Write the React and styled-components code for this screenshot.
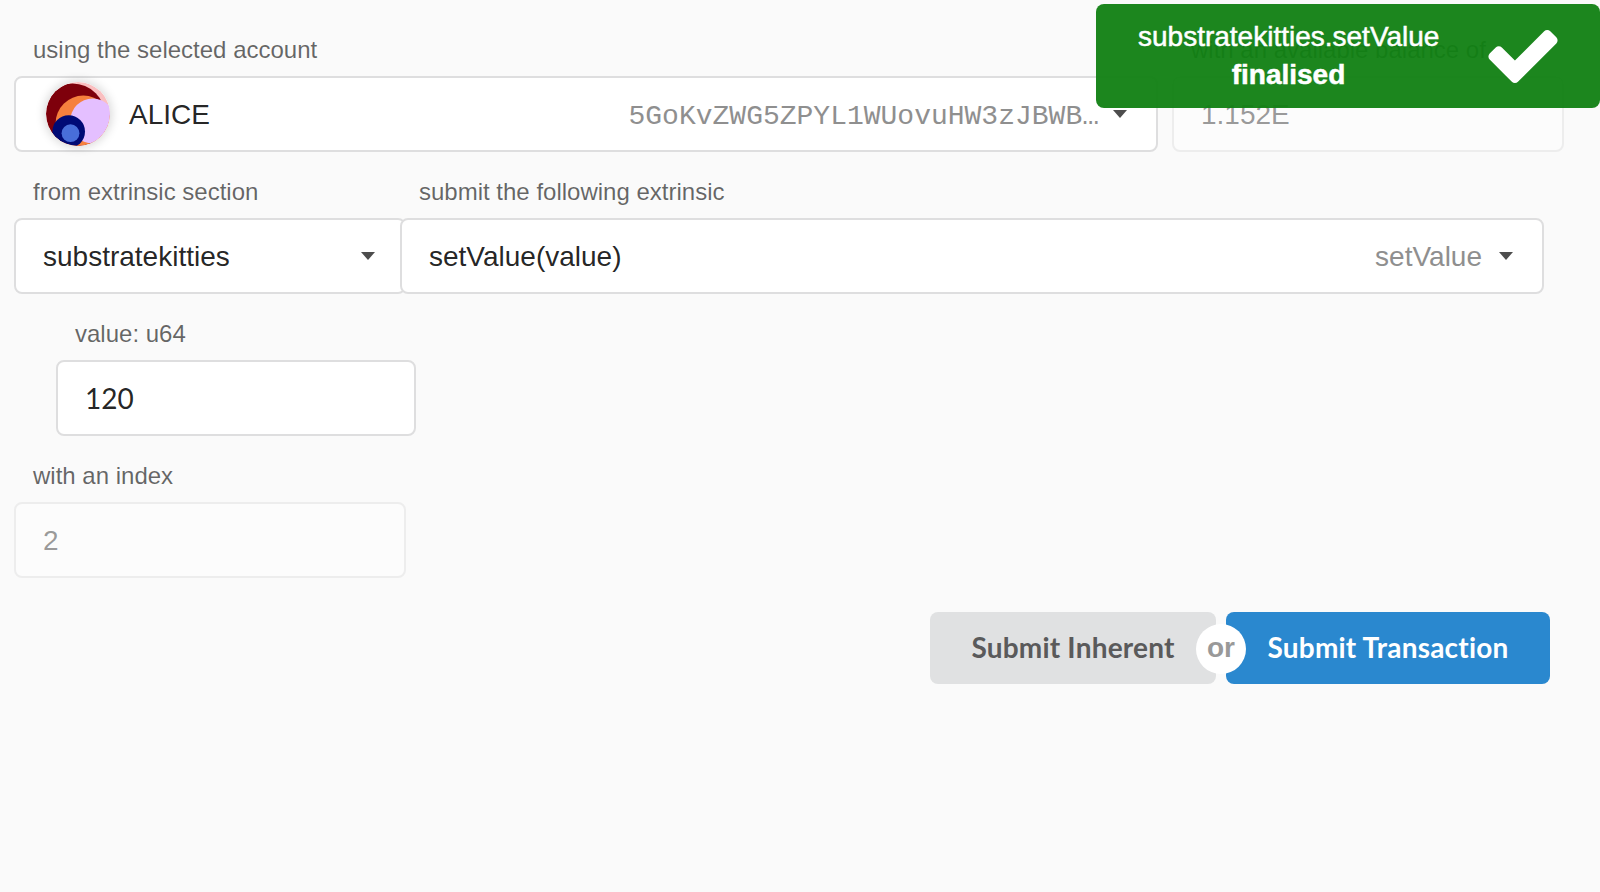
import React from 'react';
import styled, { createGlobalStyle } from 'styled-components';

const GlobalStyle = createGlobalStyle`
  *, *::before, *::after { box-sizing: border-box; }
  body {
    margin: 0;
    background: #fafafa;
    color: rgba(0, 0, 0, 0.87);
    font-family: "Liberation Sans", Arial, sans-serif;
    font-size: 28px;
    overflow: hidden;
  }
`;

const Page = styled.main`
  display: flex;
  flex-direction: column;
  height: 892px;
  padding: 10px 36px 0 14px;
`;

const Row = styled.div`
  display: flex;
  gap: ${(p) => p.$gap || 0}px;
  padding-left: ${(p) => p.$indent || 0}px;
`;

const Field = styled.div`
  flex: none;
  width: ${(p) => p.$width}px;
  margin-left: ${(p) => (p.$joined ? -6 : 0)}px;
  z-index: ${(p) => (p.$joined ? 1 : 0)};
`;

const Label = styled.label`
  display: block;
  height: 66px;
  padding: 26px 0 0 19px;
  font-size: 24px;
  line-height: 27px;
  white-space: nowrap;
  color: rgba(0, 0, 0, 0.6);
`;

const Control = styled.div`
  display: flex;
  align-items: center;
  height: 76px;
  padding: 0 29px 0 27px;
  border: 2px solid #dededf;
  border-radius: 8px;
  background: #fff;
  line-height: 34px;
  white-space: nowrap;
  opacity: ${(p) => (p.$disabled ? 0.45 : 1)};
`;

const Value = styled.span`
  flex: 1;
  padding-top: ${(p) => (p.$lato ? 0 : 2)}px;
  font-family: ${(p) => (p.$lato ? 'Lato, sans-serif' : 'inherit')};
`;

const Hint = styled.span`
  padding-top: 2px;
  color: #8f8f8f;
  margin-right: 17px;
`;

const Address = styled(Hint)`
  padding-top: 6px;
  font-family: "Liberation Mono", "Courier New", monospace;
  margin-right: 14px;
`;

const Caret = styled.span`
  width: 0;
  height: 0;
  border: 7px solid transparent;
  border-top: 8px solid #4d4d4d;
  border-bottom: 0;
`;

const Avatar = styled.svg`
  flex: none;
  width: 64px;
  height: 64px;
  margin: 0 19px 0 3px;
  border-radius: 50%;
  box-shadow: 0 0 10px 2px rgba(0, 0, 0, 0.15);
`;

const Actions = styled.div`
  display: flex;
  justify-content: flex-end;
  gap: 10px;
  margin-top: 34px;
  padding-right: 14px;
`;

const Button = styled.button`
  width: ${(p) => p.$width}px;
  height: 72px;
  padding: 0 0 2px;
  border: 0;
  border-radius: 8px;
  font: 700 28px/28px Lato, sans-serif;
  font-variant-ligatures: none;
  letter-spacing: 0.2px;
  color: ${(p) => (p.$primary ? '#fff' : '#5a5a5b')};
  background: ${(p) => (p.$primary ? '#2a88cf' : '#e0e1e2')};
`;

const OrAnchor = styled.div`
  position: relative;
  width: 0;
  margin: 0 -5px;
`;

const Or = styled.span`
  position: absolute;
  top: 12px;
  left: -25px;
  width: 50px;
  height: 50px;
  border-radius: 50%;
  background: #fff;
  color: #999;
  font-weight: 700;
  line-height: 48px;
  text-align: center;
`;

const Toast = styled.aside`
  position: absolute;
  top: 4px;
  right: 0;
  z-index: 5;
  display: flex;
  align-items: center;
  width: 504px;
  height: 104px;
  padding: 0 42px;
  border-radius: 8px;
  background: rgba(16, 128, 18, 0.95);
  color: #fff;
`;

const ToastText = styled.div`
  flex: none;
  width: 301px;
  line-height: 38px;
  text-align: center;
  white-space: nowrap;
  -webkit-text-stroke: 0.5px #fff;
`;

const Check = styled.svg`
  width: 70px;
  height: 53px;
  margin: 0 0 0 auto;
`;

function Identicon() {
  return (
    <Avatar viewBox="0 0 64 64">
      <defs>
        <clipPath id="disc"><circle cx="32" cy="32" r="32" /></clipPath>
      </defs>
      <g clipPath="url(#disc)">
        <rect width="64" height="64" fill="#fabfc0" />
        <circle cx="26.5" cy="34.5" r="32.9" fill="#7e000b" />
        <circle cx="37.3" cy="41.3" r="27.7" fill="#f6803e" />
        <circle cx="46.7" cy="39" r="22.5" fill="#e4bfff" />
        <circle cx="22.7" cy="49.6" r="16.3" fill="#000a75" />
        <circle cx="24.5" cy="51.2" r="8.9" fill="#486ed9" />
      </g>
    </Avatar>
  );
}

export default function App() {
  return (
    <>
      <GlobalStyle />
      <Page>
        <Row $gap={14}>
          <Field $width={1144}>
            <Label>using the selected account</Label>
            <Control>
              <Identicon />
              <Value>ALICE</Value>
              <Address>5GoKvZWG5ZPYL1WUovuHW3zJBWB…</Address>
              <Caret />
            </Control>
          </Field>
          <Field $width={392}>
            <Label>with an available balance of</Label>
            <Control $disabled><Value>1.152E</Value></Control>
          </Field>
        </Row>
        <Row>
          <Field $width={392}>
            <Label>from extrinsic section</Label>
            <Control>
              <Value>substratekitties</Value>
              <Caret />
            </Control>
          </Field>
          <Field $width={1144} $joined>
            <Label>submit the following extrinsic</Label>
            <Control>
              <Value>setValue(value)</Value>
              <Hint>setValue</Hint>
              <Caret />
            </Control>
          </Field>
        </Row>
        <Row $indent={42}>
          <Field $width={360}>
            <Label>value: u64</Label>
            <Control><Value $lato>120</Value></Control>
          </Field>
        </Row>
        <Row>
          <Field $width={392}>
            <Label>with an index</Label>
            <Control $disabled><Value>2</Value></Control>
          </Field>
        </Row>
        <Actions>
          <Button $width={286}>Submit Inherent</Button>
          <OrAnchor><Or>or</Or></OrAnchor>
          <Button $width={324} $primary>Submit Transaction</Button>
        </Actions>
      </Page>
      <Toast>
        <ToastText>
          <div>substratekitties.setValue</div>
          <strong>finalised</strong>
        </ToastText>
        <Check viewBox="121 334 1550 1188">
          <path
            fill="#fff"
            d="M1671 566q0 40-28 68l-724 724-136 136q-28 28-68 28t-68-28l-136-136-362-362q-28-28-28-68t28-68l136-136q28-28 68-28t68 28l294 295 656-657q28-28 68-28t68 28l136 136q28 28 28 68z"
          />
        </Check>
      </Toast>
    </>
  );
}
